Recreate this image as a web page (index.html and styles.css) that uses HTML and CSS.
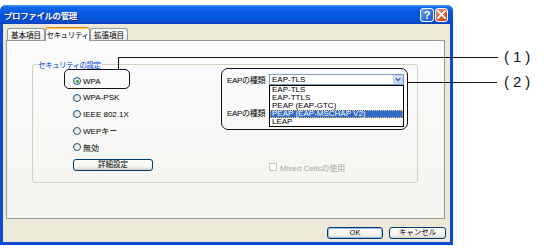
FILE: index.html
```html
<!DOCTYPE html>
<html lang="ja">
<head>
  <meta charset="UTF-8" />
  <title>プロファイルの管理</title>
  <link rel="stylesheet" href="styles.css">
</head>
<body>

<div class="stage">
  <div class="window">
    <div class="titlebar">
      <span class="title">プロファイルの管理</span>
      <div class="caption-btns">
        <span class="cap-btn help">?</span>
        <span class="cap-btn close">
          <svg width="9" height="9" viewBox="0 0 9 9"><path d="M1 1 L8 8 M8 1 L1 8" stroke="#fff" stroke-width="1.8" stroke-linecap="square"/></svg>
        </span>
      </div>
    </div>

    <div class="client">
      <div class="tabs">
        <div class="tab t1">基本項目</div>
        <div class="tab t2 active">セキュリティ</div>
        <div class="tab t3">拡張項目</div>
      </div>

      <div class="panel">
        <div class="group">
          <span class="legend">セキュリティの設定</span>

          <div class="left">
            <div class="radio-row"><span class="radio checked"></span>WPA</div>
            <div class="radio-row"><span class="radio"></span>WPA-PSK</div>
            <div class="radio-row"><span class="radio"></span>IEEE 802.1X</div>
            <div class="radio-row"><span class="radio"></span>WEPキー</div>
            <div class="radio-row"><span class="radio"></span>無効</div>
            <button class="btn detail">詳細設定</button>
          </div>

          <div class="right">
            <div class="field">
              <span class="lbl">EAPの種類</span>
              <div class="combo">
                <span>EAP-TLS</span>
                <span class="arrow">
                  <svg width="6" height="5" viewBox="0 0 6 5"><path d="M0.5 1 L3 3.5 L5.5 1" fill="none" stroke="#4D6185" stroke-width="1.3"/></svg>
                </span>
              </div>
            </div>
            <div class="field second">
              <span class="lbl">EAPの種類</span>
            </div>
            <div class="check-row"><span class="checkbox"></span>Mixed Cellsの使用</div>

            <!-- 開いたドロップダウン -->
            <ul class="droplist">
              <li>EAP-TLS</li>
              <li>EAP-TTLS</li>
              <li>PEAP (EAP-GTC)</li>
              <li class="selected">PEAP (EAP-MSCHAP V2)</li>
              <li>LEAP</li>
            </ul>
          </div>
        </div>
      </div>

      <div class="actions">
        <button class="btn ok">OK</button>
        <button class="btn cancel">キャンセル</button>
      </div>
    </div>
  </div>

  <!-- 引き出し線 -->
  <div class="callout c1"></div>
  <div class="lead v1"></div>
  <div class="lead h1"></div>
  <span class="note n1">(1)</span>

  <div class="callout c2"></div>
  <div class="lead h2"></div>
  <span class="note n2">(2)</span>
</div>

</body>
</html>
```

FILE: styles.css
```css
body {
  margin: 0;
  background: #fff;
  font-family: "Liberation Sans", "Noto Sans CJK JP", sans-serif;
  font-size: 8px;
  color: #000;
}

.stage {
  position: relative;
  width: 544px;
  height: 250px;
  padding-top: 5px;
  box-sizing: border-box;
}

.window {
  width: 453px;
  height: 240px;
  background: #0B4BD6;
  border-radius: 6px 6px 0 0;
  display: flex;
  flex-direction: column;
}

.titlebar {
  height: 19px;
  flex-shrink: 0;
  display: flex;
  align-items: center;
  justify-content: space-between;
  padding: 0 5px 0 4px;
  border-radius: 6px 6px 0 0;
  background: linear-gradient(#4A97F8 0%, #1469EA 12%, #0558E0 40%, #0453DC 70%, #0A4ED2 88%, #0C3FB4 100%);
}

.title {
  color: #fff;
  font-family: "Noto Sans CJK JP", sans-serif;
  font-weight: bold;
  font-size: 8.5px;
  letter-spacing: -0.4px;
  text-shadow: 1px 1px 0 #0F2A8B;
}

.caption-btns {
  display: flex;
  gap: 1px;
}

.cap-btn {
  width: 14px;
  height: 14px;
  box-sizing: border-box;
  border: 1px solid #fff;
  border-radius: 3px;
  display: flex;
  align-items: center;
  justify-content: center;
  color: #fff;
  font-weight: bold;
  font-size: 11px;
}

.cap-btn.help {
  background: linear-gradient(135deg, #7AA7F5, #2E6EE5 60%, #2258CF);
}

.cap-btn.close {
  width: 13px;
  background: linear-gradient(135deg, #F19A7A, #E1572D 55%, #C5401C);
}

.client {
  flex: 1;
  margin: 0 3px 3px;
  background: #ECE9D8;
  padding: 4px 5px 0 3px;
  display: flex;
  flex-direction: column;
}

.tabs {
  display: flex;
  height: 12px;
  margin-left: 1px;
  position: relative;
  z-index: 1;
}

.tab {
  height: 12px;
  box-sizing: border-box;
  border: 1px solid #919B9C;
  border-bottom: none;
  border-radius: 3px 3px 0 0;
  background: linear-gradient(#fff, #ECEBE6);
  font-family: "Noto Sans CJK JP", sans-serif;
  font-size: 7.5px;
  line-height: 11px;
  text-align: center;
  white-space: nowrap;
}

.t1 { width: 38px; }
.t2 { width: 45px; }
.t3 { width: 38px; }

.tab.active {
  height: 14px;
  margin-top: -1px;
  background: #FCFCFE;
  border-top: 1px solid #E68B2C;
  box-shadow: inset 0 1px 0 #FFC83C;
  line-height: 13px;
  letter-spacing: -0.4px;
}

.panel {
  width: 439px;
  height: 179px;
  box-sizing: border-box;
  border: 1px solid #919B9C;
  background: linear-gradient(#FCFCFE, #F4F3EE);
  padding: 23px 0 0 25px;
}

.group {
  width: 386px;
  height: 119px;
  box-sizing: border-box;
  border: 1px solid #D0D0BF;
  border-radius: 3px;
  position: relative;
  display: flex;
}

.legend {
  position: absolute;
  top: -6px;
  left: 4px;
  padding: 0 1px;
  background: #F9F9F9;
  color: #0046D5;
  font-family: "Noto Sans CJK JP", sans-serif;
  font-size: 7.5px;
  line-height: 11px;
  letter-spacing: -0.5px;
}

.left {
  width: 194px;
  box-sizing: border-box;
  padding: 8px 0 0 40px;
}

.radio-row {
  height: 16.5px;
  display: flex;
  align-items: center;
  gap: 2px;
}

.radio {
  width: 8px;
  height: 8px;
  box-sizing: border-box;
  border: 1px solid #1C5180;
  border-radius: 50%;
  background: linear-gradient(135deg, #DCDCD7, #fff);
  display: flex;
  align-items: center;
  justify-content: center;
}

.radio.checked::after {
  content: "";
  width: 3px;
  height: 3px;
  border-radius: 50%;
  background: #21A121;
}

.btn {
  height: 12px;
  box-sizing: border-box;
  border: 1px solid #003C74;
  border-radius: 3px;
  background: linear-gradient(#fff, #F3F3EF 70%, #D6D0C5);
  font-family: "Liberation Sans", "Noto Sans CJK JP", sans-serif;
  font-size: 7.5px;
  line-height: 10px;
  padding: 0;
  color: #000;
}

.btn.detail {
  width: 80px;
  margin-top: 3.5px;
}

.right {
  flex: 1;
  position: relative;
  padding-top: 9px;
}

.field {
  display: flex;
  align-items: center;
  height: 11px;
}

.lbl {
  width: 42px;
  letter-spacing: -0.3px;
}

.combo {
  width: 135px;
  height: 11px;
  box-sizing: border-box;
  border: 1px solid #7F9DB9;
  background: #fff;
  display: flex;
  align-items: center;
  justify-content: space-between;
  padding-left: 2px;
  line-height: 9px;
}

.arrow {
  width: 10px;
  height: 9px;
  box-sizing: border-box;
  border: 1px solid #B9CBF3;
  border-radius: 1px;
  background: linear-gradient(#E2EBFE, #C1D3FB);
  display: flex;
  align-items: center;
  justify-content: center;
}

.field.second {
  margin-top: 22px;
}

.check-row {
  margin-top: 44px;
  height: 10px;
  padding-left: 42px;
  display: flex;
  align-items: center;
  gap: 3px;
  color: #ACA899;
}

.checkbox {
  width: 8px;
  height: 8px;
  box-sizing: border-box;
  border: 1px solid #CAC8BB;
  background: #fff;
}

.droplist {
  position: absolute;
  left: 42px;
  top: 20px;
  width: 135px;
  box-sizing: border-box;
  margin: 0;
  padding: 0;
  list-style: none;
  border: 1px solid #000;
  background: #fff;
}

.droplist li {
  height: 8px;
  line-height: 8px;
  padding-left: 2px;
  white-space: nowrap;
}

.droplist li.selected {
  background: #316AC5;
  color: #fff;
  outline: 1px dotted #E8C46A;
  outline-offset: -1px;
}

.actions {
  display: flex;
  justify-content: flex-end;
  gap: 6px;
  margin-top: 8px;
  margin-right: -1px;
}

.btn.ok {
  width: 56px;
  box-shadow: inset 0 0 0 1px #9DBCEB;
}

.btn.cancel {
  width: 57px;
}

/* 引き出し線 */
.callout {
  position: absolute;
  box-sizing: border-box;
  border: 1.5px solid #111;
}

.c1 {
  left: 64px;
  top: 69px;
  width: 66px;
  height: 20px;
  border-radius: 5px;
}

.c2 {
  left: 221px;
  top: 68px;
  width: 187px;
  height: 62px;
  border-radius: 7px;
}

.lead {
  position: absolute;
  background: #111;
}

.v1 {
  left: 117.5px;
  top: 57px;
  width: 1.5px;
  height: 12px;
}

.h1 {
  left: 117.5px;
  top: 56.5px;
  width: 380px;
  height: 1.5px;
}

.h2 {
  left: 408px;
  top: 81.5px;
  width: 89px;
  height: 1.5px;
}

.note {
  position: absolute;
  left: 504px;
  font-size: 15px;
  line-height: 16px;
  letter-spacing: 4px;
  color: #111;
}

.n1 { top: 49px; }
.n2 { top: 74px; }
```
